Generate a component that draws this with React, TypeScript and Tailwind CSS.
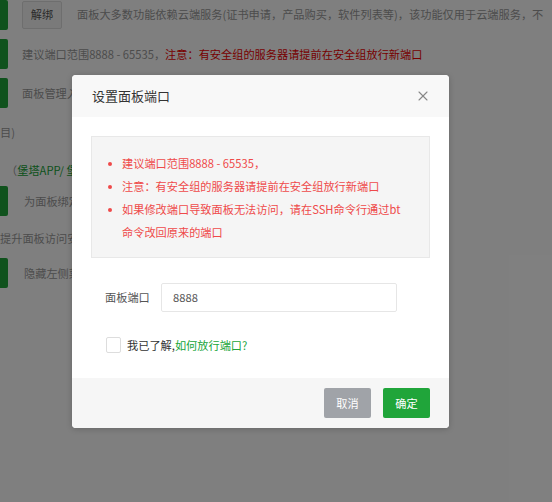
import { X } from 'lucide-react'

const font = { fontFamily: '"Noto Sans CJK SC", "Noto Sans", sans-serif' }

function GreenBlock() {
  return <div className="w-[8px] h-[30px] bg-[#20a53a] rounded-r-[2px] shrink-0" />
}

function Background() {
  return (
    <div className="flex flex-col text-[11.2px] text-[#999] whitespace-nowrap">
      <div className="flex items-center h-[29px]">
        <GreenBlock />
        <div className="ml-[14px] shrink-0 w-[40px] h-[28px] border border-[#ddd] bg-[#f5f5f5] rounded-[2px] flex items-center justify-center text-[#555]">解绑</div>
        <span className="ml-[15px]">面板大多数功能依赖云端服务(证书申请，产品购买，软件列表等)，该功能仅用于云端服务，不</span>
      </div>
      <div className="flex items-center h-[30px] mt-[10px]">
        <GreenBlock />
        <span className="ml-[14px]">建议端口范围8888 - 65535，</span>
        <span className="text-[#e00]">注意：有安全组的服务器请提前在安全组放行新端口</span>
      </div>
      <div className="flex items-center h-[30px] mt-[9px]">
        <GreenBlock />
        <span className="ml-[14px]">面板管理入口</span>
      </div>
      <div className="h-[24px] mt-[12px] flex items-center">目)</div>
      <div className="h-[24px] mt-[14px] flex items-center">
        <span className="ml-[6px]">（</span>
        <span className="text-[#20a53a]">堡塔APP/ 堡</span>
      </div>
      <div className="flex items-center h-[30px] mt-[4px]">
        <GreenBlock />
        <span className="ml-[16px]">为面板绑定</span>
      </div>
      <div className="h-[24px] mt-[10px] flex items-center">提升面板访问安全</div>
      <div className="flex items-center h-[30px] mt-[8px]">
        <GreenBlock />
        <span className="ml-[16px]">隐藏左侧菜单</span>
      </div>
    </div>
  )
}

function Bullet() {
  return (
    <span className="w-[14px] h-[23px] shrink-0 flex items-center">
      <span className="w-[4px] h-[4px] rounded-full bg-[#ef4a4a]" />
    </span>
  )
}

function PortDialog() {
  return (
    <div className="absolute left-[72px] top-[75px] w-[377px] bg-white rounded-[4px] overflow-hidden shadow-[0_1px_6px_rgba(0,0,0,0.2)]">
      <div className="h-[42px] bg-[#f8f8f8] flex items-center justify-between pl-[20px] pr-[18px]">
        <span className="text-[13px] text-[#333]">设置面板端口</span>
        <X size={16} strokeWidth={1.6} className="text-[#888]" />
      </div>
      <div className="px-[19px] pt-[19px]">
        <div className="h-[122px] bg-[#f5f5f5] border border-[#e8e8e8] pl-[16px] pt-[15px]">
          <ul className="text-[11.2px] leading-[23px] text-[#ef4a4a]">
            <li className="flex"><Bullet />建议端口范围8888 - 65535，</li>
            <li className="flex"><Bullet />注意：有安全组的服务器请提前在安全组放行新端口</li>
            <li className="flex">
              <Bullet />
              <span>如果修改端口导致面板无法访问，请在SSH命令行通过bt<br />命令改回原来的端口</span>
            </li>
          </ul>
        </div>
        <div className="flex items-center mt-[25px] h-[29px]">
          <span className="ml-[14px] w-[56px] text-[11.2px] text-[#555]">面板端口</span>
          <div className="w-[236px] h-[29px] border border-[#e6e6e6] rounded-[2px] flex items-center pl-[11px] text-[11.2px] text-[#555]">8888</div>
        </div>
        <div className="flex items-center mt-[25px] h-[16px]">
          <div className="ml-[15px] w-[15px] h-[16px] border border-[#ddd] rounded-[2px] bg-white" />
          <span className="ml-[6px] text-[11.2px] text-[#333]">我已了解,</span>
          <span className="text-[11.2px] text-[#20a53a]">如何放行端口?</span>
        </div>
      </div>
      <div className="mt-[25px] h-[50px] bg-[#f6f6f6] flex items-center justify-end gap-[12px] pr-[19px]">
        <button className="w-[47px] h-[30px] bg-[#a0a3a8] text-white text-[11.2px] rounded-[2px]">取消</button>
        <button className="w-[47px] h-[30px] bg-[#20a53a] text-white text-[11.2px] rounded-[2px]">确定</button>
      </div>
    </div>
  )
}

export default function App() {
  return (
    <div className="relative w-[552px] h-[502px] overflow-hidden bg-white" style={font}>
      <Background />
      <div className="absolute inset-0 bg-black/50" />
      <PortDialog />
    </div>
  )
}
